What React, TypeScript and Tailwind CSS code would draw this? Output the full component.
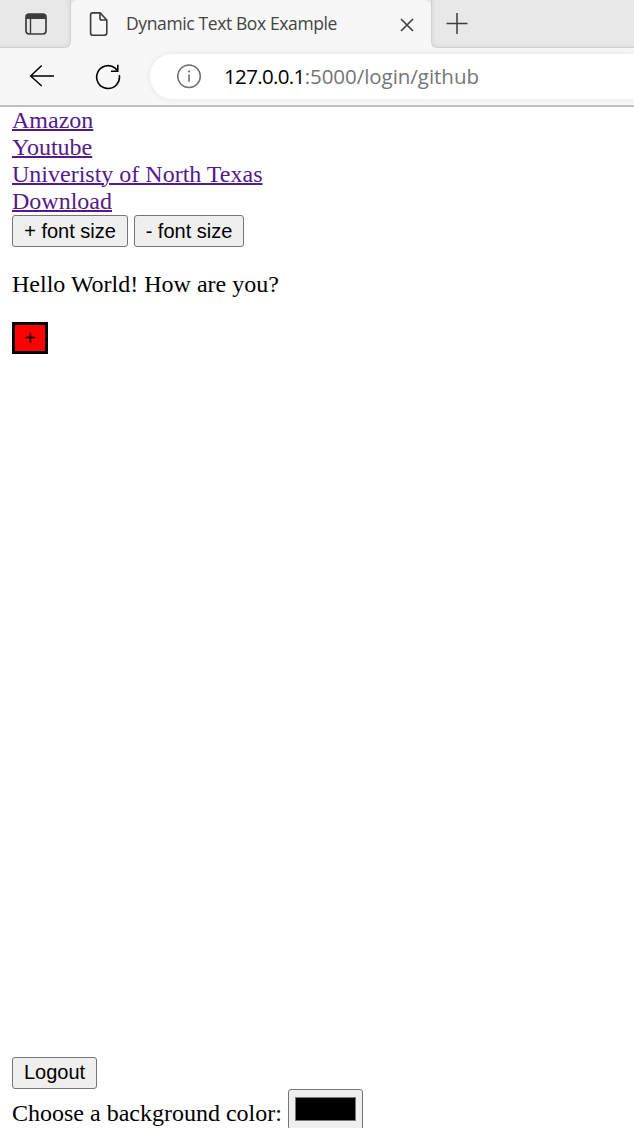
import React from "react";

const links = ["Amazon", "Youtube", "Univeristy of North Texas", "Download"];

const buttonBase =
  "box-border h-8 shrink-0 rounded-[3px] border border-[#767676] bg-[#efefef] p-0 text-center font-['Liberation_Sans',sans-serif] text-[20px] text-black whitespace-nowrap";

function TabStrip() {
  return (
    <div className="flex h-12 bg-[#f7f7f7]">
      <div className="flex w-[71px] shrink-0 items-start rounded-br-[6px] border-r border-b border-[#d2d2d2] bg-[#e8e8e8] pt-[13px] pl-[25px] shadow-[inset_-2px_-2px_3px_rgba(0,0,0,0.04)]">
        <svg width="22" height="22" viewBox="0 0 22 22" fill="none">
          <rect x="1" y="1" width="20" height="20" rx="3.2" stroke="#3c3c3c" strokeWidth="1.7" />
          <path d="M1 6V4a3 3 0 0 1 3-3h14a3 3 0 0 1 3 3v2z" fill="#3c3c3c" />
          <path d="M5.5 6v15" stroke="#3c3c3c" strokeWidth="1.4" />
        </svg>
      </div>
      <div className="flex w-[360px] shrink-0 bg-[#e8e8e8]">
        <div className="flex w-full rounded-t-[7px] bg-[#f7f7f7]">
          <svg className="mt-3 ml-[18px] shrink-0" width="20" height="24" viewBox="0 0 20 24" fill="none" stroke="#3c3c3c" strokeWidth="1.6" strokeLinejoin="round">
            <path d="M3.6 .9h7.5L17.8 8v13a2.2 2.2 0 0 1-2.2 2.2H3.6A2.2 2.2 0 0 1 1.6 21V3A2.1 2.1 0 0 1 3.6 .9z" />
            <path d="M11 1v5.2A1.8 1.8 0 0 0 12.8 8h5" />
          </svg>
          <span className="ml-[17px] w-[274px] pt-[10px] font-['Open_Sans',sans-serif] text-[17.5px] leading-[26px] tracking-[-0.38px] whitespace-nowrap text-[#444]">
            Dynamic Text Box Example
          </span>
          <svg className="mt-[18px] shrink-0" width="14" height="14" viewBox="0 0 14 14" stroke="#3d3d3d" strokeWidth="1.6">
            <path d="M1 1l12 12M13 1L1 13" />
          </svg>
        </div>
      </div>
      <div className="flex-1 rounded-bl-[6px] border-b border-l border-[#d2d2d2] bg-[#e8e8e8] pt-[13px] pl-[14px] shadow-[inset_2px_-2px_3px_rgba(0,0,0,0.04)]">
        <svg width="22" height="22" viewBox="0 0 22 22" stroke="#3d3d3d" strokeWidth="1.5">
          <path d="M.5 10.5h21M11 0v21" />
        </svg>
      </div>
    </div>
  );
}

function Toolbar() {
  return (
    <div className="flex h-[59px] border-b-2 border-[#bfbfbf] bg-[#f7f7f7]">
      <svg className="mt-4 ml-[29px] shrink-0" width="25" height="24" viewBox="0 0 25 24" fill="none" stroke="#000" strokeWidth="1.5">
        <path d="M12.7 1.5L1.7 12l11 10M1.7 12H25" />
      </svg>
      <svg className="mt-4 ml-[41px] shrink-0" width="26" height="26" viewBox="0 0 26 26" fill="none" stroke="#000" strokeWidth="1.6">
        <path d="M24.3 11.2A11.4 11.4 0 1 1 20.2 4.2L22.6 7" />
        <path d="M22.8 .7V7.2H16" />
      </svg>
      <div className="ml-[29px] mt-[6px] flex h-[45px] flex-1 rounded-l-full bg-white pl-[27px] shadow-[0_0_7px_rgba(0,0,0,0.07)]">
        <svg className="mt-[10px] shrink-0" width="25" height="25" viewBox="0 0 25 25" fill="none">
          <circle cx="12" cy="12.3" r="11.3" stroke="#707070" strokeWidth="1.5" />
          <path d="M12 10.5v7.3" stroke="#707070" strokeWidth="1.6" />
          <circle cx="12" cy="7.4" r="1.1" fill="#707070" />
        </svg>
        <span className="ml-[22px] pt-[7px] font-['Open_Sans',sans-serif] text-[20.5px] leading-[30px] tracking-[-0.04px] whitespace-nowrap text-[#757575]">
          <span className="tracking-[-0.65px] text-black">127.0.0.1</span>:5000/login/github
        </span>
      </div>
    </div>
  );
}

export default function App() {
  return (
    <div className="flex h-[1128px] w-[634px] flex-col overflow-hidden bg-white">
      <TabStrip />
      <Toolbar />
      <main className="flex min-h-0 flex-1 flex-col items-start pl-3 font-['Liberation_Serif',serif] text-[24px] leading-[27px] text-black">
        {links.map((label) => (
          <a key={label} href="#" className="block h-[27px] shrink-0 text-[#551a8b] underline decoration-2">
            {label}
          </a>
        ))}
        <div className="flex gap-[6px]">
          <button className={`${buttonBase} w-[116px] leading-[30px]`}>+ font size</button>
          <button className={`${buttonBase} w-[110px] leading-[30px]`}>- font size</button>
        </div>
        <p className="mt-6">Hello World! How are you?</p>
        <button className="mt-6 h-8 w-9 shrink-0 border-3 border-black bg-[#ff0000] p-0 text-center font-['Liberation_Sans',sans-serif] text-[20px] leading-[26px] text-black">
          +
        </button>
        <button className={`${buttonBase} mt-[703px] w-[85px] leading-[28px]`}>
          <span className="block h-[30px]">Logout</span>
        </button>
        <div className="flex shrink-0">
          <label className="pt-[11px] whitespace-nowrap">Choose a background color:</label>
          <button aria-label="Background color" className="ml-[6px] h-[41px] w-[75px] rounded-[3px] border border-[#767676] bg-[#efefef] px-[6px] pt-[7px] pb-2">
            <span className="block h-6 w-[61px] border border-[#777] bg-black" />
          </button>
        </div>
      </main>
    </div>
  );
}
